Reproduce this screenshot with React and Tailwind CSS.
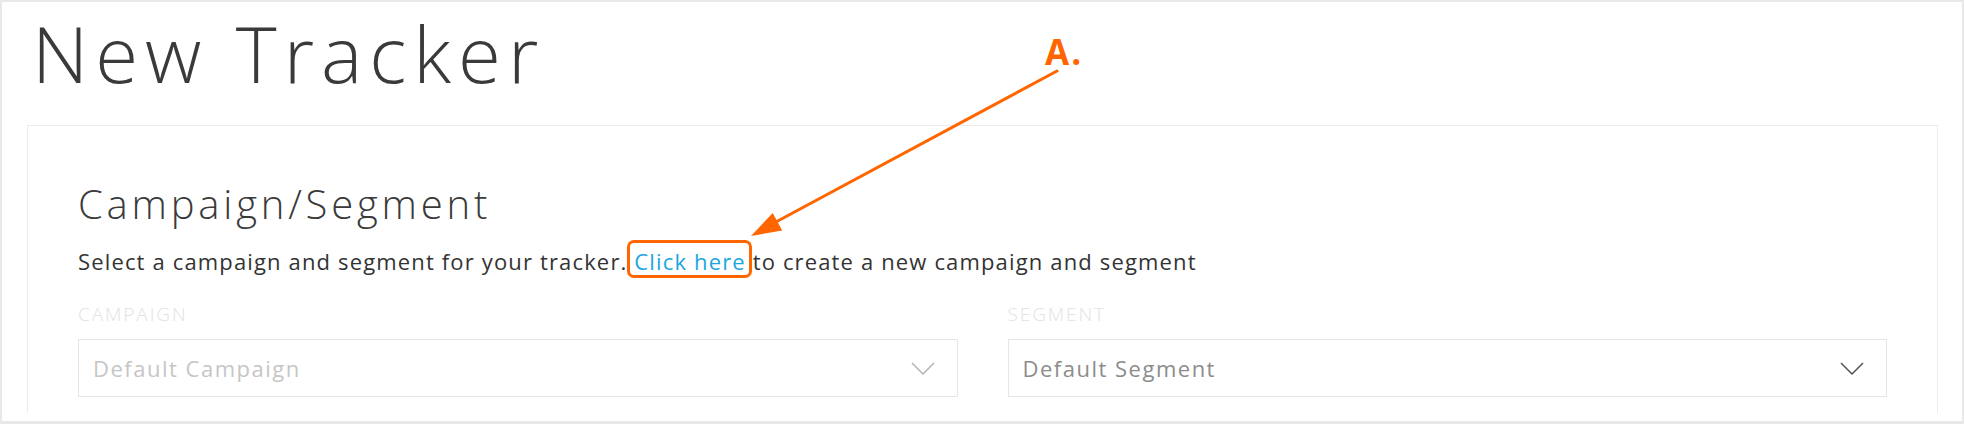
import React from "react";

const Chevron = ({ className }) => (
  <svg width="24" height="13" viewBox="0 0 24 13" className={className} fill="none">
    <path d="M1 1l11 11L23 1" stroke="currentColor" strokeWidth="1.5" />
  </svg>
);

const SelectBox = ({ label, value, muted }) => (
  <div className="flex flex-col">
    <span className="text-[19px] leading-[19px] font-light text-[#e2e2e2] tracking-[1.9px]">{label}</span>
    <div className="mt-[15px] h-[58px] border border-[#e6e6e6] flex items-center justify-between pl-[14px] pr-[22px]">
      <span className={`text-[22px] tracking-[1.5px] ${muted ? "text-[#c6c6c6]" : "text-[#8c8c8c]"}`}>{value}</span>
      <Chevron className={muted ? "text-[#b4b4b4]" : "text-[#555555]"} />
    </div>
  </div>
);

const App = () => {
  return (
    <div
      className="relative w-[1964px] h-[424px] bg-[#e8e8e8] pt-[2px] pl-[2px] pr-[2px] pb-[3px] overflow-hidden"
      style={{ fontFamily: '"Open Sans", "Liberation Sans", sans-serif' }}
    >
      <div className="h-full bg-white">
        {/* Page title */}
        <h1 className="ml-[30px] pt-[3px] text-[78px] leading-[96px] font-light text-[#3a3a3a] tracking-[7px]">
          New Tracker
        </h1>

        {/* Card */}
        <div className="ml-[25px] mr-[24px] mt-[24px] h-[288px] border border-b-0 border-[#ececec] pt-[58px] px-[50px]">
          <h2 className="text-[40px] leading-[40px] font-light text-[#3a3a3a] tracking-[3.8px]">Campaign/Segment</h2>
          <p className="mt-[18px] text-[22px] leading-[38px] text-[#333333] tracking-[1.15px]">
            Select a campaign and segment for your tracker.{" "}
            <span className="relative">
              <a href="#" className="text-[#1ba6e0]">Click here</a>
              <span className="absolute -left-[7px] -right-[6px] -top-[6px] -bottom-[2px] border-[3px] border-[#ff6600] rounded-[7px]" />
            </span>{" "}
            to create a new campaign and segment
          </p>

          <div className="mt-[25px] grid grid-cols-2 gap-[50px]">
            <SelectBox label="CAMPAIGN" value="Default Campaign" muted />
            <SelectBox label="SEGMENT" value="Default Segment" />
          </div>
        </div>
      </div>

      {/* Annotation */}
      <span className="absolute left-[1045px] top-[34px] text-[35px] leading-[35px] font-bold text-[#ff6600] tracking-[2px]">A.</span>
      <svg className="absolute inset-0 pointer-events-none" width="1964" height="424" viewBox="0 0 1964 424">
        <line x1="1057" y1="71" x2="774" y2="223" stroke="#ff6600" strokeWidth="3" strokeLinecap="round" />
        <polygon points="751,236 772.7,213 782.2,230.5" fill="#ff6600" />
      </svg>
    </div>
  );
};

export default App;
